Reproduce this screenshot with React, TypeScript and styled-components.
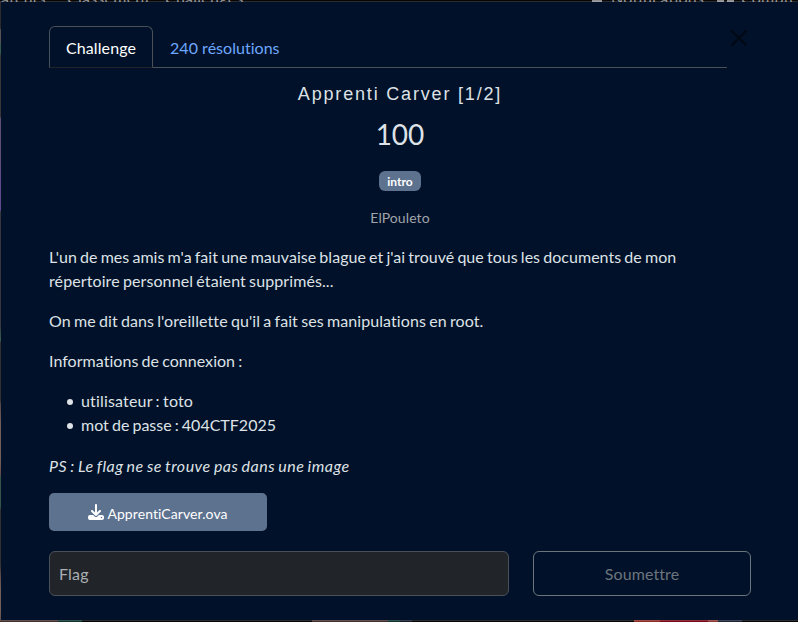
import React from "react";
import styled, { createGlobalStyle } from "styled-components";
import { FaDownload } from "react-icons/fa6";

const GlobalStyle = createGlobalStyle`
  *, *::before, *::after { box-sizing: border-box; }
  html, body { margin: 0; overflow: hidden; background: #050506; }
  body { font-family: Lato, sans-serif; font-size: 16px; line-height: 24px; color: #dee2e6; font-variant-ligatures: none; }
`;

const Page = styled.div`
  position: relative;
  width: 798px;
  height: 622px;
  overflow: hidden;
  padding-top: 1px;
  background:
    linear-gradient(90deg, #44312f 0 58px, #10362f 58px 82px, #060607 82px 312px, #44312f 312px 388px, #10362f 388px 400px, #171d2d 400px 412px, #060607 412px 634px, #8f2c26 634px 660px, #7b0a18 660px 708px, #8f3b36 708px 718px, #20263a 718px 742px, #060607 742px) 0 619px / 798px 3px no-repeat,
    linear-gradient(180deg, #08080a 0 28px, #3d3436 30px 42px, #123c31 44px 53px, #191416 56px 117px, #44305f 118px 160px, #462a7a 180px 210px, #13161d 212px 325px, #173b31 338px 341px, #100e10 342px 400px, #3c2928 405px, #59443f 425px 460px, #482d2b 474px, #12372b 477px 507px, #100e10 510px 565px, #3f2a28 575px, #59443f 590px 610px, #44312f 622px) 0 0 / 1px 622px no-repeat,
    #060607;
`;

const SiteNav = styled.div`
  position: absolute;
  top: -11px;
  left: 0;
  width: 798px;
  height: 18px;
  font-size: 16px;
  line-height: 18px;
  letter-spacing: 0.25px;
  color: #8d8f93;
`;

const NavText = styled.span<{ $x: number }>`
  position: absolute;
  left: ${(p) => p.$x}px;
  white-space: nowrap;
`;

const NavGlyph = styled.i<{ $x: number; $w: number }>`
  position: absolute;
  left: ${(p) => p.$x}px;
  bottom: 4px;
  width: ${(p) => p.$w}px;
  height: 4px;
  background: #8d8f93;
`;

const Modal = styled.section`
  position: relative;
  width: 800px;
  height: 620px;
  padding: 24px 48px;
  border: 1px solid rgba(255, 255, 255, 0.15);
  background: #001129;
  background-clip: padding-box;
`;

const Header = styled.div`
  display: flex;
  align-items: flex-start;
`;

const Tabs = styled.nav`
  display: flex;
  width: 678px;
  height: 42px;
  border-bottom: 1px solid #495057;
`;

const Tab = styled.a<{ $active?: boolean }>`
  height: 42px;
  padding: 9px 16px 7px;
  border: 1px solid ${(p) => (p.$active ? "#495057" : "transparent")};
  border-bottom-color: ${(p) => (p.$active ? "#212529" : "transparent")};
  border-radius: 6px 6px 0 0;
  color: ${(p) => (p.$active ? "#fff" : "#6ea8fe")};
  letter-spacing: ${(p) => (p.$active ? "0.1px" : "0.03px")};
`;

const Close = styled.button`
  display: flex;
  margin: 4px 0 0 4px;
  padding: 0;
  border: 0;
  background: none;
  color: #000;
  opacity: 0.5;
`;

const Summary = styled.header`
  display: flex;
  flex-direction: column;
  align-items: center;
`;

const Title = styled.h4`
  margin: 14px 0 0;
  font: 400 18px/24px "Liberation Sans", Arial, sans-serif;
  letter-spacing: 1.82px;
`;

const Points = styled.h5`
  margin: 11px 0 0;
  font-size: 28px;
  font-weight: 400;
  line-height: 34px;
`;

const Badge = styled.span`
  height: 20px;
  margin-top: 20px;
  padding: 5px 8px 3px;
  border-radius: 6px;
  background: #5d728f;
  color: #fff;
  font-size: 12px;
  font-weight: 700;
  line-height: 12px;
`;

const Author = styled.small`
  margin-top: 16px;
  font-size: 14px;
  line-height: 21px;
  letter-spacing: 0.1px;
  color: #a0a4aa;
`;

const Description = styled.div`
  margin-top: 17px;
  word-spacing: -1px;
  p { margin: 0 0 16px; }
`;

const Line = styled.span<{ $tracking: number }>`
  display: block;
  white-space: nowrap;
  letter-spacing: ${(p) => p.$tracking}px;
`;

const Credentials = styled.ul`
  margin: 0 0 17px;
  padding-left: 18px;
  list-style: none;
`;

const Credential = styled.li`
  display: flex;
  align-items: center;
  gap: 8px;
  &::before {
    content: "";
    width: 6px;
    height: 6px;
    margin-top: 2px;
    border-radius: 50%;
    background: #dee2e6;
  }
`;

const Note = styled.em`
  letter-spacing: 0.48px;
`;

const FileLink = styled.a`
  display: flex;
  align-items: center;
  justify-content: center;
  gap: 3px;
  width: 218px;
  height: 38px;
  margin-top: -1px;
  padding-top: 3px;
  border-radius: 5px;
  background: #5d728f;
  color: #fff;
  font-size: 14px;
  letter-spacing: 0.08px;
  svg { margin-top: -3px; }
`;

const Form = styled.form`
  display: grid;
  grid-template-columns: 460px 218px;
  column-gap: 24px;
  margin-top: 20px;
`;

const FlagInput = styled.input`
  height: 45px;
  padding: 0 9px;
  border: 1px solid #495057;
  border-radius: 6px;
  background: #212529;
  font: 16px Lato, sans-serif;
  letter-spacing: 0.2px;
  color: #dee2e6;
  &::placeholder { color: #abafb3; opacity: 1; }
`;

const Submit = styled.button`
  height: 45px;
  padding: 0;
  border: 1px solid #6c757d;
  border-radius: 6px;
  background: transparent;
  color: #6c757d;
  font: 16px Lato, sans-serif;
  font-variant-ligatures: none;
  letter-spacing: 0.1px;
`;

export default function App() {
  return (
    <Page>
      <GlobalStyle />
      <SiteNav>
        <NavText $x={-7}>cateurs</NavText>
        <NavText $x={67}>Classement</NavText>
        <NavText $x={165}>Challenges</NavText>
        <NavGlyph $x={592} $w={10} />
        <NavText $x={611}>Notifications</NavText>
        <NavGlyph $x={717} $w={7} />
        <NavGlyph $x={727} $w={7} />
        <NavText $x={741}>Compte</NavText>
      </SiteNav>
      <Modal>
        <Header>
          <Tabs>
            <Tab $active>Challenge</Tab>
            <Tab>240 résolutions</Tab>
          </Tabs>
          <Close aria-label="Fermer">
            <svg width="16" height="16" viewBox="0 0 16 16" fill="currentColor">
              <path d="M.293.293a1 1 0 0 1 1.414 0L8 6.586 14.293.293a1 1 0 1 1 1.414 1.414L9.414 8l6.293 6.293a1 1 0 0 1-1.414 1.414L8 9.414l-6.293 6.293a1 1 0 0 1-1.414-1.414L6.586 8 .293 1.707a1 1 0 0 1 0-1.414z" />
            </svg>
          </Close>
        </Header>
        <Summary>
          <Title>Apprenti Carver [1/2]</Title>
          <Points>100</Points>
          <Badge>intro</Badge>
          <Author>ElPouleto</Author>
        </Summary>
        <Description>
          <p>
            <Line $tracking={0.035}>
              L'un de mes amis m'a fait une mauvaise blague et j'ai trouvé que tous les documents de mon
            </Line>
            <Line $tracking={0.1}>répertoire personnel étaient supprimés...</Line>
          </p>
          <p>
            <Line $tracking={0.09}>On me dit dans l'oreillette qu'il a fait ses manipulations en root.</Line>
          </p>
          <p>
            <Line $tracking={0.04}>Informations de connexion :</Line>
          </p>
          <Credentials>
            <Credential>
              <Line $tracking={0.17}>utilisateur : toto</Line>
            </Credential>
            <Credential>
              <Line $tracking={0}>mot de passe : 404CTF2025</Line>
            </Credential>
          </Credentials>
          <p><Note>PS : Le flag ne se trouve pas dans une image</Note></p>
        </Description>
        <FileLink>
          <FaDownload size={16} />
          ApprentiCarver.ova
        </FileLink>
        <Form onSubmit={(e) => e.preventDefault()}>
          <FlagInput placeholder="Flag" />
          <Submit type="submit">Soumettre</Submit>
        </Form>
      </Modal>
    </Page>
  );
}
